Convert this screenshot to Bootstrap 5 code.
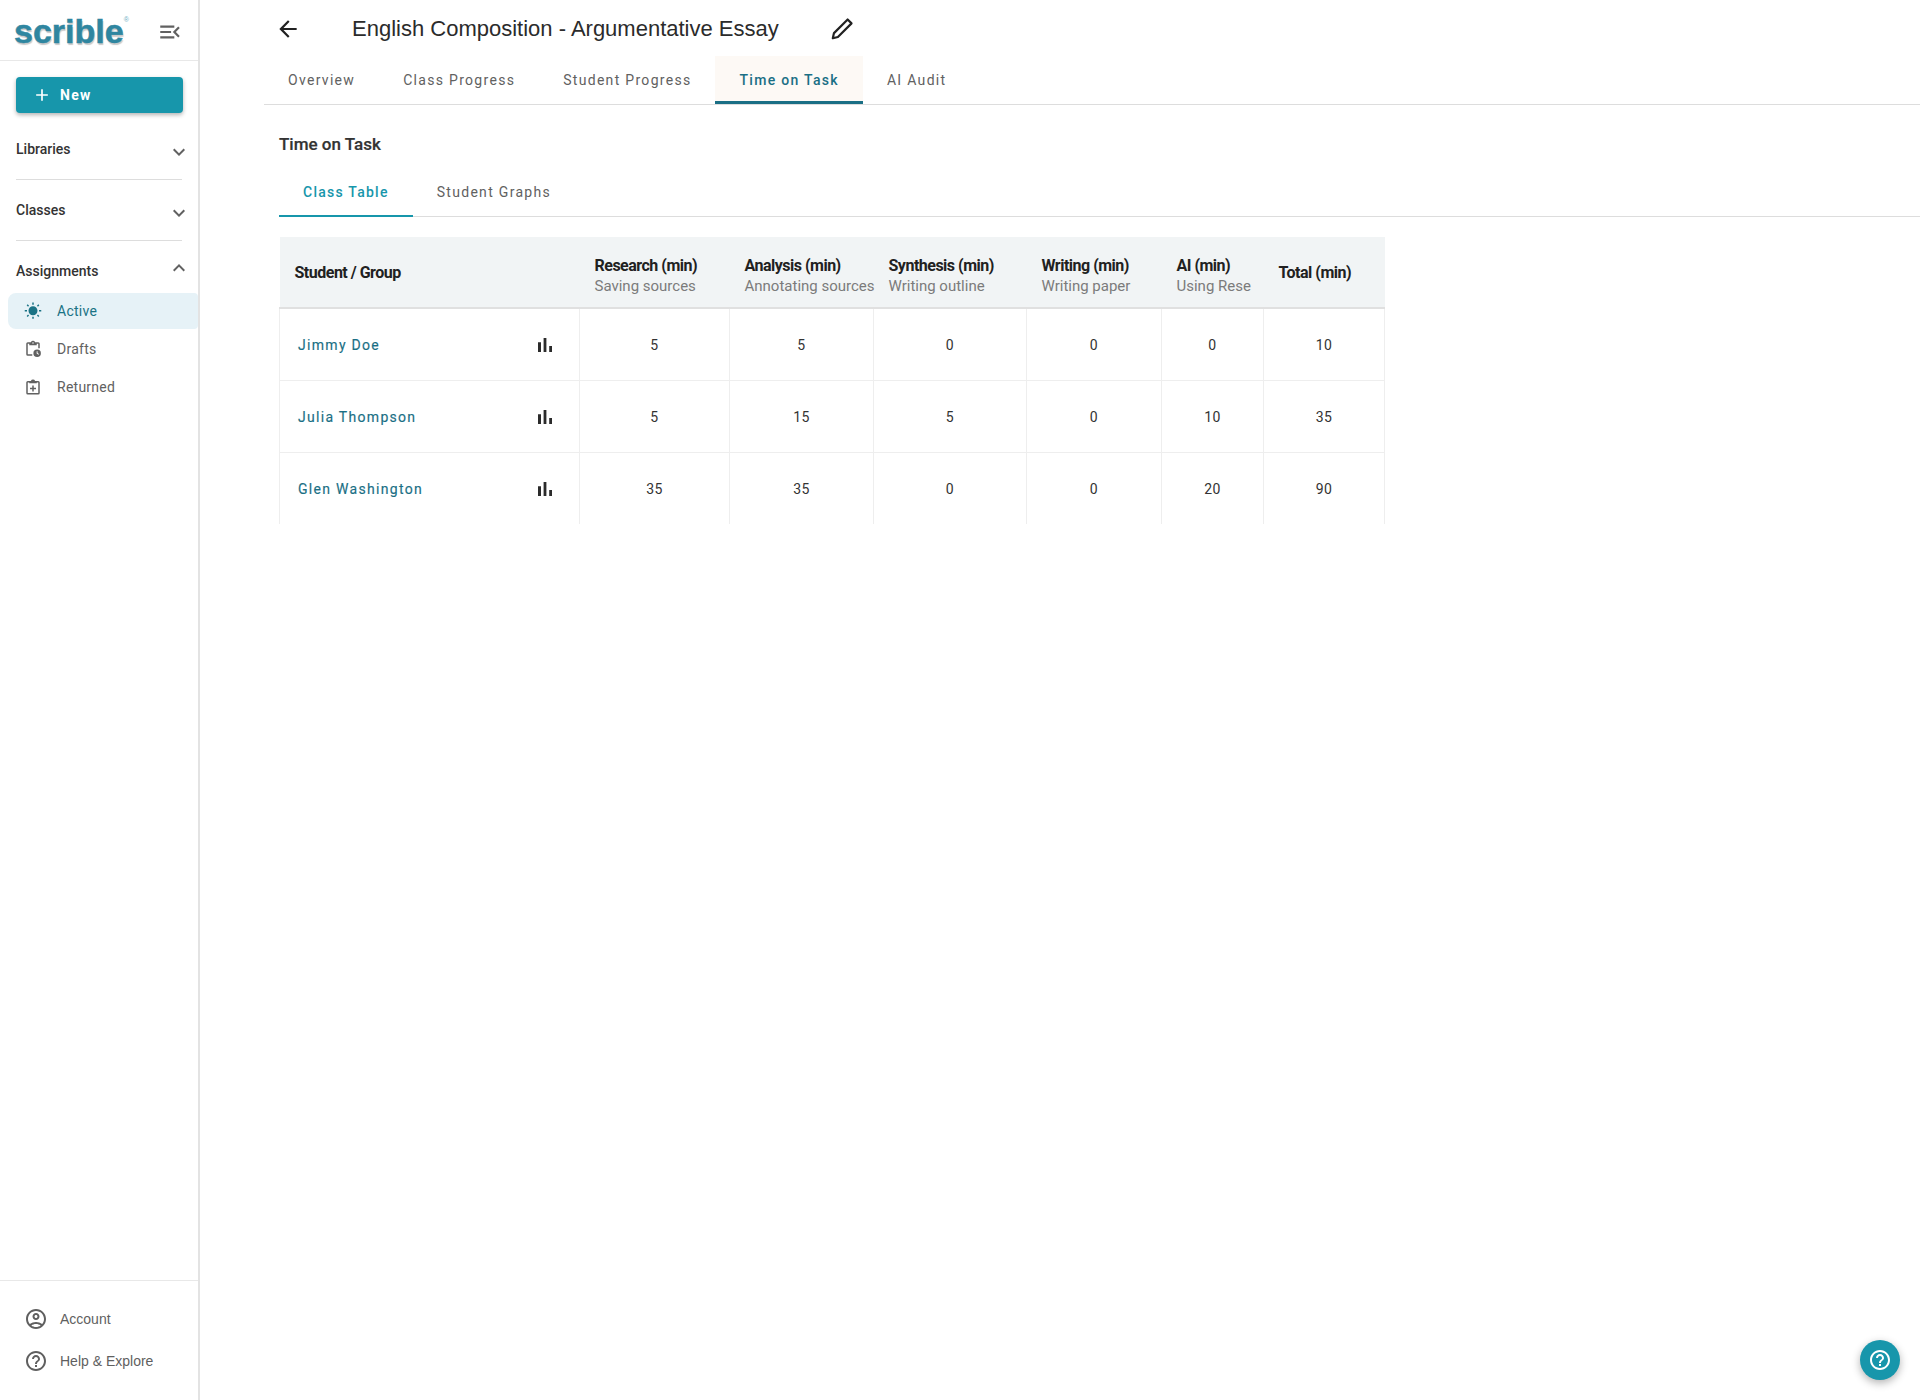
<!DOCTYPE html>
<html>

<head>
  <title>Time on Task</title>
  <link href="https://cdn.jsdelivr.net/npm/bootstrap@5.3.2/dist/css/bootstrap.min.css" rel="stylesheet">
  <style>
    body { font-family: Roboto, sans-serif; color: #212121; background: #fff; }
    .app-shell { min-height: 1400px; }
    .side-bar { width: 200px; flex: 0 0 200px; border-right: 2px solid #e3e3e3; }
    .side-top { height: 61px; border-bottom: 1px solid #e8e8e8; padding: 2px 15px 0 14px; }
    .side-top > svg { width: 26px; height: 26px; margin-top: 2px; }
    .logo-word { font-family: "Liberation Sans", sans-serif; font-weight: 700; font-size: 34px; line-height: 1; letter-spacing: 0; color: #2f86a0; -webkit-text-stroke: .5px #2f86a0; text-shadow: 1px 2px 1px #c9c9c9; }
    .logo-word sup { font-size: 7px; font-weight: 400; top: -3em; text-shadow: none; -webkit-text-stroke: 0; color: #6fb0c4; }
    .new-btn { margin: 16px 16px 0; width: 167px; height: 36px; background: #1796ab; color: #fff; border: 0; border-radius: 4px; box-shadow: 0 2px 4px rgba(0,0,0,.3); font-size: 14px; font-weight: 700; letter-spacing: 1.25px; padding: 0 0 0 16px; gap: 4px; }
    .new-btn:hover { background: #1796ab; color: #fff; }
    .side-sec { margin: 0 16px; padding: 16px 0; border-bottom: 1px solid #ddd; }
    .side-sec.first-sec { padding-top: 22px; }
    .side-sec.open-sec { border-bottom: 0; padding-bottom: 8px; }
    .sec-head { height: 28px; font-size: 14px; font-weight: 500; color: #333; }
    .sec-chev { width: 24px; height: 24px; fill: #616161; margin-right: -9px; margin-top: 6px; }
    .open-sec .sec-chev { margin-top: -6px; }
    .side-item { height: 36px; margin: 0 0 2px 8px; padding-left: 16px; gap: 15px; font-size: 14px; letter-spacing: .25px; color: #616161; border-radius: 8px 4px 4px 8px; }
    .side-item svg { width: 18px; height: 18px; fill: #616161; flex: none; }
    .side-item.on-item { background: #e6f2f7; color: #1a7385; }
    .side-item.on-item svg { fill: #1a7385; }
    .side-foot { border-top: 1px solid #e8e8e8; padding: 17px 0 18px 24px; }
    .foot-item { height: 42px; gap: 12px; font-family: "Liberation Sans", sans-serif; font-size: 14px; color: #5f5f5f; }
    .foot-item svg { width: 24px; height: 24px; fill: #5f5f5f; flex: none; }
    .title-row { height: 56px; padding: 2px 0 0 11px; }
    .title-row svg { width: 26px; height: 26px; fill: #212121; flex: none; }
    .page-title { font-family: "Liberation Sans", sans-serif; font-size: 22px; font-weight: 400; color: #2b2b2b; margin: 0 0 0 51px; }
    .edit-gap { margin-left: 50px; }
    .main-pane { min-width: 0; padding-left: 64px; }
    .top-tabs { border-bottom: 1px solid #ddd; height: 49px; }
    .tab-link { padding: 0 24px; height: 48px; display: flex; align-items: center; color: #616161; font-size: 14px; letter-spacing: 1.3px; border-bottom: 3px solid transparent; padding-top: 3px; }
    .tab-link:hover { color: #616161; }
    .top-tabs .tab-link.tab-on { background: #fdf9f5; color: #1a6f85; border-bottom-color: #1a6f85; font-weight: 500; }
    .task-pane { padding: 27px 0 0 15px; }
    .task-title { font-size: 17px; font-weight: 500; color: #333; line-height: 24px; margin: 0 0 13px; -webkit-text-stroke: .2px #333; }
    .sub-tabs { border-bottom: 1px solid #ddd; height: 48px; }
    .sub-tabs .tab-link { height: 48px; border-bottom-width: 2px; padding-top: 1px; }
    .sub-tabs .tab-link.tab-on { color: #1796ab; border-bottom-color: #1796ab; font-weight: 500; letter-spacing: 1.25px; }
    .time-table { width: 1105px; table-layout: fixed; margin: 20px 0 0; border-collapse: collapse; }
    .time-table th { background: #f1f4f5; height: 71px; padding: 2px 0 0 15px; vertical-align: middle; font-size: 16px; font-weight: 700; letter-spacing: -.5px; line-height: 20px; color: #212121; border-bottom: 2px solid #e0e0e0; white-space: nowrap; }
    .time-table th.two-line { padding-top: 8px; }
    .time-table th span { display: block; font-size: 15px; font-weight: 400; letter-spacing: 0; color: #7b7b7b; }
    .time-table td { height: 72px; padding: 2px 0 0; text-align: center; vertical-align: middle; font-size: 14px; letter-spacing: .5px; color: #333; border-left: 1px solid #eee; border-bottom: 1px solid #eee; }
    .time-table tr:last-child td { border-bottom: 0; }
    .time-table td:last-child { border-right: 1px solid #eee; }
    .time-table .name-cell { padding: 2px 22px 0 18px; text-align: left; }
    .name-cell a { color: #1a6f85; text-decoration: none; font-weight: 400; letter-spacing: 1.3px; -webkit-text-stroke: .15px #1a6f85; }
    .name-cell svg { width: 24px; height: 24px; fill: #2b2b2b; }
    .help-fab { position: fixed; right: 20px; bottom: 20px; width: 40px; height: 40px; border-radius: 50%; background: #1796ab; box-shadow: 0 3px 8px rgba(0,0,0,.3); }
    .help-fab svg { width: 24px; height: 24px; fill: #fff; }
  </style>
</head>

<body>
  <div class="d-flex app-shell">
    <aside class="side-bar d-flex flex-column">
      <div class="side-top d-flex align-items-center justify-content-between">
        <span class="logo-word">scrible<sup>®</sup></span>
        <svg viewBox="0 0 24 24" fill="#616161"><path d="M3 18h13v-2H3v2zm0-5h10v-2H3v2zm0-7v2h13V6H3zm18 9.59L17.42 12 21 8.41 19.59 7l-5 5 5 5L21 15.59z"/></svg>
      </div>
      <button type="button" class="btn new-btn d-flex align-items-center">
        <svg width="20" height="20" viewBox="0 0 24 24" fill="#fff"><path d="M19 13h-6v6h-2v-6H5v-2h6V5h2v6h6v2z"/></svg>
        <span class="ms-1">New</span>
      </button>

      <div class="side-sec first-sec">
        <div class="sec-head d-flex align-items-center justify-content-between">Libraries
          <svg class="sec-chev" viewBox="0 0 24 24"><path d="M16.59 8.59L12 13.17 7.41 8.59 6 10l6 6 6-6z"/></svg>
        </div>
      </div>
      <div class="side-sec">
        <div class="sec-head d-flex align-items-center justify-content-between">Classes
          <svg class="sec-chev" viewBox="0 0 24 24"><path d="M16.59 8.59L12 13.17 7.41 8.59 6 10l6 6 6-6z"/></svg>
        </div>
      </div>
      <div class="side-sec open-sec">
        <div class="sec-head d-flex align-items-center justify-content-between">Assignments
          <svg class="sec-chev" viewBox="0 0 24 24"><path d="M12 8l-6 6 1.41 1.41L12 10.83l4.59 4.58L18 14z"/></svg>
        </div>
      </div>
      <div class="side-item on-item d-flex align-items-center">
        <svg viewBox="0 0 24 24"><path d="M6.76 4.84l-1.8-1.79-1.41 1.41 1.79 1.79 1.42-1.41zM4 10.5H1v2h3v-2zm9-9.95h-2V3.5h2V.55zm7.45 3.91l-1.41-1.41-1.79 1.79 1.41 1.41 1.79-1.79zm-3.21 13.7l1.79 1.8 1.41-1.41-1.8-1.79-1.4 1.4zM20 10.5v2h3v-2h-3zm-8-5c-3.31 0-6 2.69-6 6s2.69 6 6 6 6-2.69 6-6-2.69-6-6-6zm-1 16.95h2V19.5h-2v2.95zm-7.45-3.91l1.41 1.41 1.79-1.8-1.41-1.41-1.79 1.8z"/></svg>
        Active
      </div>
      <div class="side-item d-flex align-items-center">
        <svg viewBox="0 0 24 24"><path d="M5 3h4.2a3 3 0 0 1 5.6 0H19a2 2 0 0 1 2 2v6h-2V5h-2v2H7V5H5v14h6v2H5a2 2 0 0 1-2-2V5a2 2 0 0 1 2-2zm7 0a1 1 0 1 0 0 2 1 1 0 0 0 0-2z"/><path d="M17.5 12.5a5 5 0 1 0 0 10 5 5 0 0 0 0-10zm1.8 7.2-2.4-1.6V15h1.2v2.4l1.9 1.3-.7 1z"/></svg>
        Drafts
      </div>
      <div class="side-item d-flex align-items-center">
        <svg viewBox="0 0 24 24"><path d="M5 4h4.2a3 3 0 0 1 5.6 0H19a2 2 0 0 1 2 2v14a2 2 0 0 1-2 2H5a2 2 0 0 1-2-2V6a2 2 0 0 1 2-2zm0 2v14h14V6h-2v1H7V6H5zm6 4h2v3h3v2h-3v3h-2v-3H8v-2h3v-3z"/></svg>
        Returned
      </div>

      <div class="side-foot mt-auto">
        <div class="foot-item d-flex align-items-center">
          <svg viewBox="0 0 24 24"><path d="M12 2C6.48 2 2 6.48 2 12s4.48 10 10 10 10-4.48 10-10S17.52 2 12 2zM7.35 18.5C8.66 17.56 10.26 17 12 17s3.34.56 4.65 1.5C15.34 19.44 13.74 20 12 20s-3.34-.56-4.65-1.5zm10.79-1.38C16.45 15.8 14.32 15 12 15s-4.45.8-6.14 2.12C4.7 15.73 4 13.95 4 12c0-4.42 3.58-8 8-8s8 3.58 8 8c0 1.95-.7 3.73-1.86 5.12zM12 6c-1.93 0-3.5 1.57-3.5 3.5S10.07 13 12 13s3.5-1.57 3.5-3.5S13.93 6 12 6zm0 5c-.83 0-1.5-.67-1.5-1.5S11.17 8 12 8s1.5.67 1.5 1.5S12.83 11 12 11z"/></svg>
          Account
        </div>
        <div class="foot-item d-flex align-items-center">
          <svg viewBox="0 0 24 24"><path d="M11 18h2v-2h-2v2zm1-16C6.48 2 2 6.48 2 12s4.48 10 10 10 10-4.48 10-10S17.52 2 12 2zm0 18c-4.41 0-8-3.59-8-8s3.59-8 8-8 8 3.59 8 8-3.59 8-8 8zm0-14c-2.21 0-4 1.79-4 4h2c0-1.1.9-2 2-2s2 .9 2 2c0 2-3 1.75-3 5h2c0-2.25 3-2.5 3-5 0-2.21-1.79-4-4-4z"/></svg>
          Help &amp; Explore
        </div>
      </div>
    </aside>

    <main class="main-pane flex-grow-1">
      <div class="title-row d-flex align-items-center">
        <svg viewBox="0 0 24 24"><path d="M20 11H7.83l5.59-5.59L12 4l-8 8 8 8 1.41-1.41L7.83 13H20v-2z"/></svg>
        <h1 class="page-title">English Composition - Argumentative Essay</h1>
        <svg class="edit-gap" viewBox="0 0 24 24"><path d="M17.2 3.2 20.8 6.800 8.200 19.400 3.500 20.500 4.600 15.800z" fill="none" stroke="#212121" stroke-width="2" stroke-linejoin="round"/></svg>
      </div>
      <nav class="top-tabs d-flex">
        <a class="tab-link text-decoration-none" href="#">Overview</a>
        <a class="tab-link text-decoration-none" href="#">Class Progress</a>
        <a class="tab-link text-decoration-none" href="#">Student Progress</a>
        <a class="tab-link tab-on text-decoration-none" href="#">Time on Task</a>
        <a class="tab-link text-decoration-none" href="#">AI Audit</a>
      </nav>

      <section class="task-pane">
        <h2 class="task-title">Time on Task</h2>
        <nav class="sub-tabs d-flex">
          <a class="tab-link tab-on text-decoration-none" href="#">Class Table</a>
          <a class="tab-link text-decoration-none" href="#">Student Graphs</a>
        </nav>

        <table class="time-table">
          <colgroup>
            <col width="300"><col width="150"><col width="144"><col width="153"><col width="135"><col width="102"><col width="121">
          </colgroup>
          <thead>
            <tr>
              <th>Student / Group</th>
              <th class="two-line">Research (min)<span>Saving sources</span></th>
              <th class="two-line">Analysis (min)<span>Annotating sources</span></th>
              <th class="two-line">Synthesis (min)<span>Writing outline</span></th>
              <th class="two-line">Writing (min)<span>Writing paper</span></th>
              <th class="two-line">AI (min)<span>Using Rese</span></th>
              <th>Total (min)</th>
            </tr>
          </thead>
          <tbody id="timeRows"></tbody>
        </table>
      </section>
    </main>
  </div>

  <div class="help-fab d-flex align-items-center justify-content-center">
    <svg viewBox="0 0 24 24"><path d="M11 18h2v-2h-2v2zm1-16C6.48 2 2 6.48 2 12s4.48 10 10 10 10-4.48 10-10S17.52 2 12 2zm0 18c-4.41 0-8-3.59-8-8s3.59-8 8-8 8 3.59 8 8-3.59 8-8 8zm0-14c-2.21 0-4 1.79-4 4h2c0-1.1.9-2 2-2s2 .9 2 2c0 2-3 1.75-3 5h2c0-2.25 3-2.5 3-5 0-2.21-1.79-4-4-4z"/></svg>
  </div>

  <script src="https://cdn.jsdelivr.net/npm/bootstrap@5.3.2/dist/js/bootstrap.bundle.min.js"></script>
  <script>
    const students = [
      {name: "Jimmy Doe", times: [5, 5, 0, 0, 0, 10]},
      {name: "Julia Thompson", times: [5, 15, 5, 0, 10, 35]},
      {name: "Glen Washington", times: [35, 35, 0, 0, 20, 90]}
    ];

    const timeRows = document.querySelector("#timeRows");

    for (let i = 0; i < students.length; i++) {
      const cells = students[i].times.map(t => `<td>${t}</td>`).join("");
      timeRows.innerHTML += `<tr>
        <td class="name-cell"><div class="d-flex align-items-center justify-content-between">
          <a href="#">${students[i].name}</a>
          <svg viewBox="0 0 24 24"><path d="M5 9.2h3V19H5zM10.6 5h2.8v14h-2.8zm5.6 8H19v6h-2.8z"/></svg>
        </div></td>${cells}</tr>`;
    }
  </script>
</body>

</html>
